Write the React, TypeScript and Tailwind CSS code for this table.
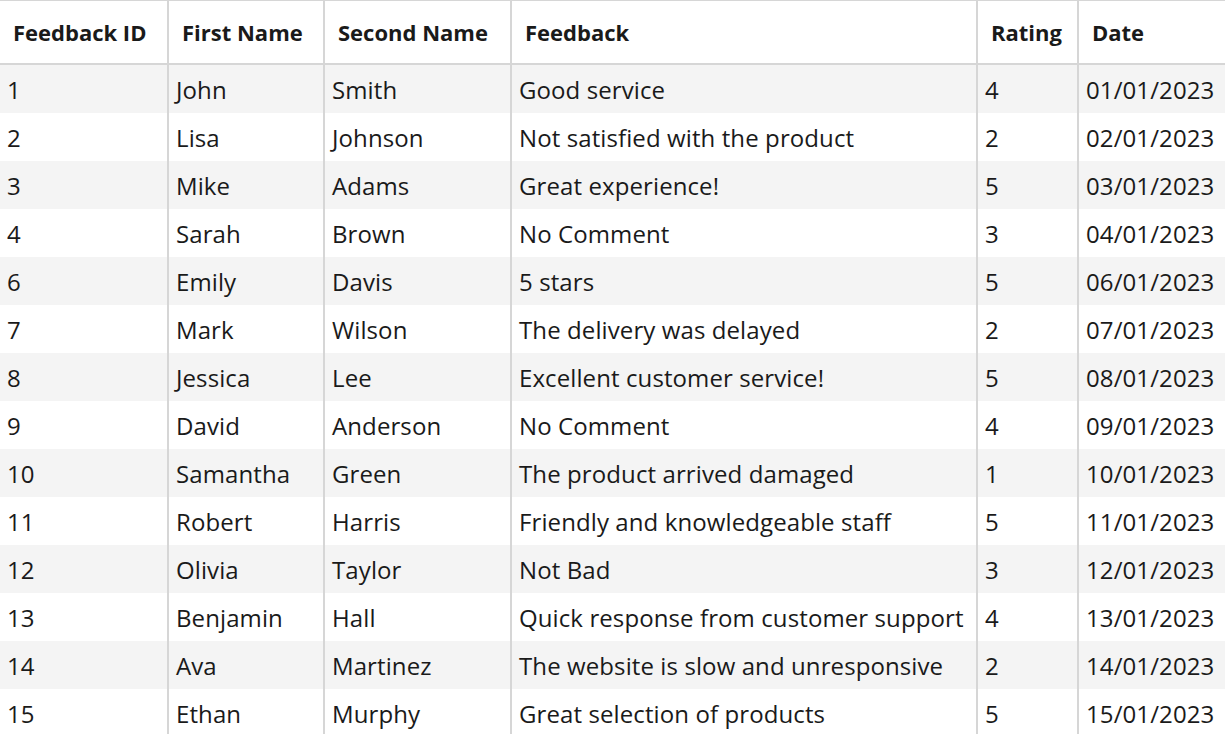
const rows = [
  ["1", "John", "Smith", "Good service", "4", "01/01/2023"],
  ["2", "Lisa", "Johnson", "Not satisfied with the product", "2", "02/01/2023"],
  ["3", "Mike", "Adams", "Great experience!", "5", "03/01/2023"],
  ["4", "Sarah", "Brown", "No Comment", "3", "04/01/2023"],
  ["6", "Emily", "Davis", "5 stars", "5", "06/01/2023"],
  ["7", "Mark", "Wilson", "The delivery was delayed", "2", "07/01/2023"],
  ["8", "Jessica", "Lee", "Excellent customer service!", "5", "08/01/2023"],
  ["9", "David", "Anderson", "No Comment", "4", "09/01/2023"],
  ["10", "Samantha", "Green", "The product arrived damaged", "1", "10/01/2023"],
  ["11", "Robert", "Harris", "Friendly and knowledgeable staff", "5", "11/01/2023"],
  ["12", "Olivia", "Taylor", "Not Bad", "3", "12/01/2023"],
  ["13", "Benjamin", "Hall", "Quick response from customer support", "4", "13/01/2023"],
  ["14", "Ava", "Martinez", "The website is slow and unresponsive", "2", "14/01/2023"],
  ["15", "Ethan", "Murphy", "Great selection of products", "5", "15/01/2023"],
];

const headers = ["Feedback ID", "First Name", "Second Name", "Feedback", "Rating", "Date"];

const cols = "grid grid-cols-[169px_156px_187px_466px_101px_146px]";

export default function App() {
  return (
    <div className="h-[734px] w-[1225px] overflow-hidden bg-white text-[#1a1a1a] [font-family:'Open_Sans','Noto_Sans',sans-serif]">
      {/* header */}
      <div className={`${cols} h-[65px] border-t border-b-2 border-[#d6d6d6]`}>
        {headers.map((h, i) => (
          <div
            key={h}
            className={`flex items-center pl-[13px] text-[22px] font-bold ${i < 5 ? "border-r-2 border-[#d6d6d6]" : ""}`}
          >
            {h}
          </div>
        ))}
      </div>

      {rows.map((r, ri) => (
        <div key={r[0]} className={`${cols} h-12 ${ri % 2 === 0 ? "bg-[#f4f4f4]" : "bg-white"}`}>
          {r.map((c, i) => (
            <div
              key={i}
              className={`flex items-center pl-[7px] pt-px text-[24px] tracking-[0.1px] whitespace-nowrap ${i < 5 ? "border-r-2 border-[#d6d6d6]" : ""}`}
            >
              {c}
            </div>
          ))}
        </div>
      ))}
    </div>
  );
}
